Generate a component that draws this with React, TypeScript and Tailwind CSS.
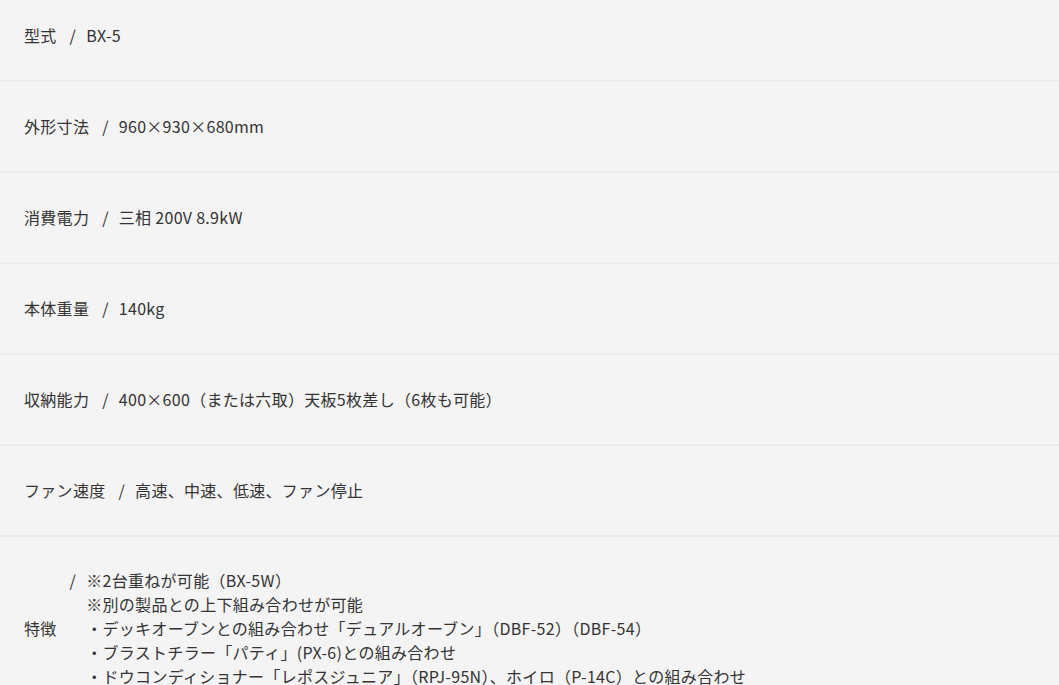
const specs = [
  { label: "型式", value: "BX-5" },
  { label: "外形寸法", value: "960×930×680mm" },
  { label: "消費電力", value: "三相 200V 8.9kW" },
  { label: "本体重量", value: "140kg" },
  { label: "収納能力", value: "400×600（または六取）天板5枚差し（6枚も可能）" },
  { label: "ファン速度", value: "高速、中速、低速、ファン停止" },
];

const features = [
  "※2台重ねが可能（BX-5W）",
  "※別の製品との上下組み合わせが可能",
  "・デッキオーブンとの組み合わせ「デュアルオーブン」（DBF-52）（DBF-54）",
  "・ブラストチラー「パティ」(PX-6)との組み合わせ",
  "・ドウコンディショナー「レポスジュニア」（RPJ-95N）、ホイロ（P-14C）との組み合わせ",
];

export default function App() {
  return (
    <div
      className="min-h-[685px] bg-[#f4f4f4] text-[#333] text-[16px] leading-[24px] tracking-[0.3px]"
      style={{ fontFamily: '"Noto Sans CJK JP", "Noto Sans", sans-serif' }}
    >
      {specs.map((s, i) => (
        <dl
          key={s.label}
          className={`flex items-center px-6 pb-[33px] border-b-2 border-[#ebebeb] ${
            i === 0 ? "pt-[23px]" : "pt-[32px]"
          }`}
        >
          <dt>{s.label}</dt>
          <dd className="flex">
            <span className="ml-[13px] mr-[10px]">/</span>
            <span>{s.value}</span>
          </dd>
        </dl>
      ))}

      <dl className="flex items-center px-6 pt-[31px] pb-6">
        <dt>特徴</dt>
        <dd className="flex items-start">
          <span className="ml-[13px] mr-[10px]">/</span>
          <div className="flex flex-col">
            {features.map((f) => (
              <p key={f}>{f}</p>
            ))}
          </div>
        </dd>
      </dl>
    </div>
  );
}
